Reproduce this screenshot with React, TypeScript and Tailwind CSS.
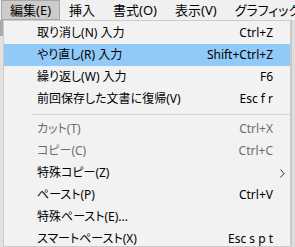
import React from "react";

type Item =
  | { sep: true }
  | { label: string; shortcut?: string; disabled?: boolean; active?: boolean; submenu?: boolean; sep?: false };

const items: Item[] = [
  { label: "取り消し(N) 入力", shortcut: "Ctrl+Z" },
  { label: "やり直し(R) 入力", shortcut: "Shift+Ctrl+Z", active: true },
  { label: "繰り返し(W) 入力", shortcut: "F6" },
  { label: "前回保存した文書に復帰(V)", shortcut: "Esc f r" },
  { sep: true },
  { label: "カット(T)", shortcut: "Ctrl+X", disabled: true },
  { label: "コピー(C)", shortcut: "Ctrl+C", disabled: true },
  { label: "特殊コピー(Z)", submenu: true },
  { label: "ペースト(P)", shortcut: "Ctrl+V" },
  { label: "特殊ペースト(E)..." },
  { label: "スマートペースト(X)", shortcut: "Esc s p t" },
];

const menus = ["編集(E)", "挿入", "書式(O)", "表示(V)", "グラフィック"];

const App = () => {
  return (
    <div className="w-[295px] h-[247px] overflow-hidden bg-[#f0f0f0] text-[12px] leading-none text-black font-['Noto_Sans','Noto_Sans_CJK_JP',sans-serif] [font-feature-settings:'palt']">
      {/* Menu bar */}
      <div className="h-[20px] flex items-stretch pl-[1px] whitespace-nowrap text-[13px]">
        {menus.map((m, i) => (
          <div
            key={m}
            className={
              i === 0
                ? "flex items-center px-[8px] bg-[#cccccc] border border-[#a8a8a8]"
                : "flex items-center px-[8px] border border-transparent"
            }
          >
            {m}
          </div>
        ))}
      </div>

      <div className="flex h-[227px]">
        {/* left strip */}
        <div className="w-[3px] flex flex-col">
          <div className="h-[16px] bg-[#a9a9a9]" />
          <div className="flex-1 bg-[#e2e2e2]" />
        </div>

        {/* Dropdown */}
        <div className="w-[288px] border border-[#cccccc] bg-[#f2f2f2] pt-[1px] flex flex-col">
          {items.map((it, i) =>
            it.sep ? (
              <div key={i} className="h-[8px] shrink-0 flex items-center pl-[28px]">
                <div className="h-px w-full bg-[#d7d7d7]" />
              </div>
            ) : (
              <div
                key={i}
                className={
                  "h-[22px] shrink-0 flex items-center pl-[33px] whitespace-nowrap " +
                  (it.active ? "bg-[#91c9f7] " : "") +
                  (it.disabled ? "text-[#6d6d6d]" : "text-black")
                }
              >
                <span className="flex-1">{it.label}</span>
                {it.shortcut && <span>{it.shortcut}</span>}
                <span className="w-[17px] flex justify-center pl-[1px] text-[#333]">
                  {it.submenu && (
                    <svg width="5" height="9" viewBox="0 0 5 9">
                      <path d="M0.5 0.5 L4 4.5 L0.5 8.5" fill="none" stroke="#333" strokeWidth="1" />
                    </svg>
                  )}
                </span>
              </div>
            )
          )}
        </div>

        {/* right strip */}
        <div className="flex-1 bg-[#dedede] border-l border-[#c4c4c4]" />
      </div>
    </div>
  );
};

export default App;
